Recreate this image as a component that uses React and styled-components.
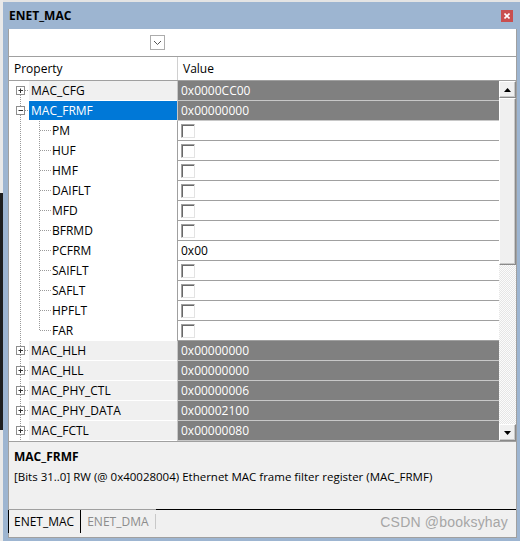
import React from 'react';
import styled, { createGlobalStyle } from 'styled-components';

const Global = createGlobalStyle`
  html, body {
    margin: 0;
    padding: 0;
    background: #e9e9e9;
  }
  body {
    font-family: "Open Sans", "Liberation Sans", sans-serif;
    font-size: 12px;
    color: #000;
    background-image: linear-gradient(#1e1e1e, #1e1e1e);
    background-size: 3px 237px;
    background-position: 0 193px;
    background-repeat: no-repeat;
  }
`;

const Window = styled.div`
  box-sizing: border-box;
  width: 517px;
  height: 541px;
  margin-left: 3px;
  border-top: 2px solid #e4e4e4;
  background: #9db5d1;
  display: flex;
  flex-direction: column;
  padding: 0 3px 3px 5px;
`;

const TitleBar = styled.div`
  height: 27px;
  display: flex;
  align-items: center;
  justify-content: space-between;
  padding: 0 4px 0 1px;
`;

const Title = styled.div`
  font-weight: 700;
  font-size: 12px;
`;

const CloseButton = styled.div`
  width: 12px;
  height: 12px;
  background: #c94f4f;
  display: flex;
  align-items: center;
  justify-content: center;
`;

const Inner = styled.div`
  flex: 1;
  display: flex;
  flex-direction: column;
  background: #f0f0f0;
  border: 1px solid #a0a0a0;
  border-top: none;
`;

const Toolbar = styled.div`
  height: 27px;
  background: #fff;
  border-bottom: 1px solid #a0a0a0;
  display: flex;
  align-items: center;
  padding-left: 141px;
`;

const DropButton = styled.div`
  width: 13px;
  height: 13px;
  border: 1px solid #acacac;
  display: flex;
  align-items: center;
  justify-content: center;
  background: #fff;
`;

const Header = styled.div`
  display: grid;
  grid-template-columns: 168px 1px 1fr;
  height: 23px;
  background: #fff;
  border-bottom: 1px solid #a0a0a0;
  padding-right: 17px;
`;

const HeadCell = styled.div`
  display: flex;
  align-items: center;
  padding-left: ${p => p.$pad}px;
`;

const VLine = styled.div`
  background: ${p => p.$color || '#a0a0a0'};
`;

const Body = styled.div`
  display: flex;
  height: 360px;
  background: #fff;
`;

const List = styled.div`
  flex: 1;
  display: flex;
  flex-direction: column;
`;

const Row = styled.div`
  display: grid;
  grid-template-columns: ${p => p.$indent}px ${p => 168 - p.$indent}px 1px 1fr;
  height: 20px;
`;

const Tree = styled.svg`
  display: block;
`;

const NameCell = styled.div`
  height: 19px;
  line-height: 19px;
  padding-left: ${p => (p.$group ? 2 : 0)}px;
  background: ${p => (p.$selected ? '#0078d7' : p.$group ? '#f0f0f0' : '#fff')};
  color: ${p => (p.$selected ? '#fff' : '#000')};
  border-bottom: 1px solid #fff;
  white-space: nowrap;
`;

const ValueCell = styled.div`
  height: 19px;
  line-height: 19px;
  padding-left: 3px;
  background: ${p => (p.$group ? '#808080' : '#fff')};
  color: ${p => (p.$group ? '#fff' : '#000')};
  border-bottom: 1px solid ${p => (p.$group ? '#c8c8c8' : '#a0a0a0')};
  display: flex;
  align-items: center;
`;

const Check = styled.div`
  box-sizing: border-box;
  width: 14px;
  height: 14px;
  margin-top: 1px;
  background: #fff;
  border: 1px solid;
  border-color: #a0a0a0 #e3e3e3 #e3e3e3 #a0a0a0;
  box-shadow: inset 1px 1px 0 #696969;
`;

const Scrollbar = styled.div`
  width: 17px;
  display: flex;
  flex-direction: column;
  background-color: #fafafa;
  background-image: repeating-conic-gradient(#e6e6e6 0 25%, #fcfcfc 0 50%);
  background-size: 2px 2px;
`;

const ScrollButton = styled.div`
  box-sizing: border-box;
  height: ${p => p.$h}px;
  background: #f0f0f0;
  border: 1px solid;
  border-color: #fff #8a8a8a #8a8a8a #fff;
  box-shadow: inset -1px -1px 0 #c8c8c8;
  display: flex;
  align-items: center;
  justify-content: center;
`;

const Spacer = styled.div`
  flex: 1;
`;

const Description = styled.div`
  height: 69px;
  border-top: 1px solid #a0a0a0;
  border-bottom: 1px solid #a0a0a0;
  padding: 6px 0 0 5px;
  box-sizing: border-box;
  font-size: 11.5px;
`;

const DescTitle = styled.div`
  font-weight: 700;
  font-size: 12px;
  line-height: 18px;
`;

const DescText = styled.div`
  line-height: 18px;
  margin-top: 2px;
`;

const Tabs = styled.div`
  display: flex;
  align-items: stretch;
  height: 23px;
`;

const Tab = styled.div`
  display: flex;
  align-items: center;
  padding: 0 6px 0 5px;
  color: ${p => (p.$active ? '#000' : '#8c8c8c')};
  border-right: 1px solid ${p => (p.$active ? '#000' : '#c8c8c8')};
  border-left: ${p => (p.$active ? '1px solid #000' : 'none')};
  margin-left: ${p => (p.$active ? '-1px' : '0')};
  ${p => !p.$active && 'margin: 4px 0; padding-left: 6px;'}
`;

const TabFill = styled.div`
  flex: 1;
  border-top: 1px solid #000;
  display: flex;
  align-items: center;
  justify-content: flex-end;
  padding-right: 8px;
  margin-top: -1px;
`;

const Watermark = styled.span`
  font-family: "Liberation Sans", Arial, sans-serif;
  font-size: 14px;
  color: #a6a6a6;
  letter-spacing: 0.2px;
`;

const rows = [
  { name: 'MAC_CFG', value: '0x0000CC00', group: true, open: false, first: true },
  { name: 'MAC_FRMF', value: '0x00000000', group: true, open: true, selected: true },
  { name: 'PM', check: true },
  { name: 'HUF', check: true },
  { name: 'HMF', check: true },
  { name: 'DAIFLT', check: true },
  { name: 'MFD', check: true },
  { name: 'BFRMD', check: true },
  { name: 'PCFRM', value: '0x00' },
  { name: 'SAIFLT', check: true },
  { name: 'SAFLT', check: true },
  { name: 'HPFLT', check: true },
  { name: 'FAR', check: true, last: true },
  { name: 'MAC_HLH', value: '0x00000000', group: true },
  { name: 'MAC_HLL', value: '0x00000000', group: true },
  { name: 'MAC_PHY_CTL', value: '0x00000006', group: true },
  { name: 'MAC_PHY_DATA', value: '0x00002100', group: true },
  { name: 'MAC_FCTL', value: '0x00000080', group: true },
];

const dots = '1 1';
const lineColor = '#9a9a9a';

function GroupTree({ open, first }) {
  return (
    <Tree width="20" height="20">
      <line x1="11.5" y1={first ? 10 : 0} x2="11.5" y2="20" stroke={lineColor} strokeDasharray={dots} />
      <line x1="16" y1="9.5" x2="20" y2="9.5" stroke={lineColor} strokeDasharray={dots} />
      <rect x="7.5" y="5.5" width="8" height="8" fill="#fff" stroke="#8e8e8e" />
      <line x1="9.5" y1="9.5" x2="14" y2="9.5" stroke="#333" />
      {!open && <line x1="11.5" y1="7.5" x2="11.5" y2="12" stroke="#333" />}
    </Tree>
  );
}

function ChildTree({ last }) {
  return (
    <Tree width="43" height="20">
      <line x1="11.5" y1="0" x2="11.5" y2="20" stroke={lineColor} strokeDasharray={dots} />
      <line x1="30.5" y1="0" x2="30.5" y2={last ? 10 : 20} stroke={lineColor} strokeDasharray={dots} />
      <line x1="31" y1="9.5" x2="42" y2="9.5" stroke={lineColor} strokeDasharray={dots} />
    </Tree>
  );
}

export default function App() {
  return (
    <>
      <Global />
      <Window>
        <TitleBar>
          <Title>ENET_MAC</Title>
          <CloseButton>
            <svg width="6" height="6" viewBox="0 0 6 6">
              <path d="M0.5 0.5 L5.5 5.5 M5.5 0.5 L0.5 5.5" stroke="#fff" strokeWidth="1.6" />
            </svg>
          </CloseButton>
        </TitleBar>
        <Inner>
          <Toolbar>
            <DropButton>
              <svg width="9" height="6" viewBox="0 0 9 6">
                <path d="M1 1 L4.5 4.5 L8 1" fill="none" stroke="#555" strokeWidth="1" />
              </svg>
            </DropButton>
          </Toolbar>
          <Header>
            <HeadCell $pad={5}>Property</HeadCell>
            <VLine $color="#d0d0d0" />
            <HeadCell $pad={5}>Value</HeadCell>
          </Header>
          <Body>
            <List>
              {rows.map(r => (
                <Row key={r.name} $indent={r.group ? 20 : 43}>
                  {r.group ? <GroupTree open={r.open} first={r.first} /> : <ChildTree last={r.last} />}
                  <NameCell $group={r.group} $selected={r.selected}>{r.name}</NameCell>
                  <VLine $color={r.group ? '#c8c8c8' : '#a0a0a0'} />
                  <ValueCell $group={r.group}>{r.check ? <Check /> : r.value}</ValueCell>
                </Row>
              ))}
            </List>
            <Scrollbar>
              <ScrollButton $h={17}>
                <svg width="7" height="4" viewBox="0 0 7 4"><path d="M3.5 0 L7 4 L0 4 Z" fill="#000" /></svg>
              </ScrollButton>
              <ScrollButton $h={167} />
              <Spacer />
              <ScrollButton $h={17}>
                <svg width="7" height="4" viewBox="0 0 7 4"><path d="M0 0 L7 0 L3.5 4 Z" fill="#000" /></svg>
              </ScrollButton>
            </Scrollbar>
          </Body>
          <Description>
            <DescTitle>MAC_FRMF</DescTitle>
            <DescText>[Bits 31..0] RW (@ 0x40028004) Ethernet MAC frame filter register (MAC_FRMF)</DescText>
          </Description>
          <Tabs>
            <Tab $active>ENET_MAC</Tab>
            <Tab>ENET_DMA</Tab>
            <TabFill>
              <Watermark>CSDN @booksyhay</Watermark>
            </TabFill>
          </Tabs>
        </Inner>
      </Window>
    </>
  );
}
